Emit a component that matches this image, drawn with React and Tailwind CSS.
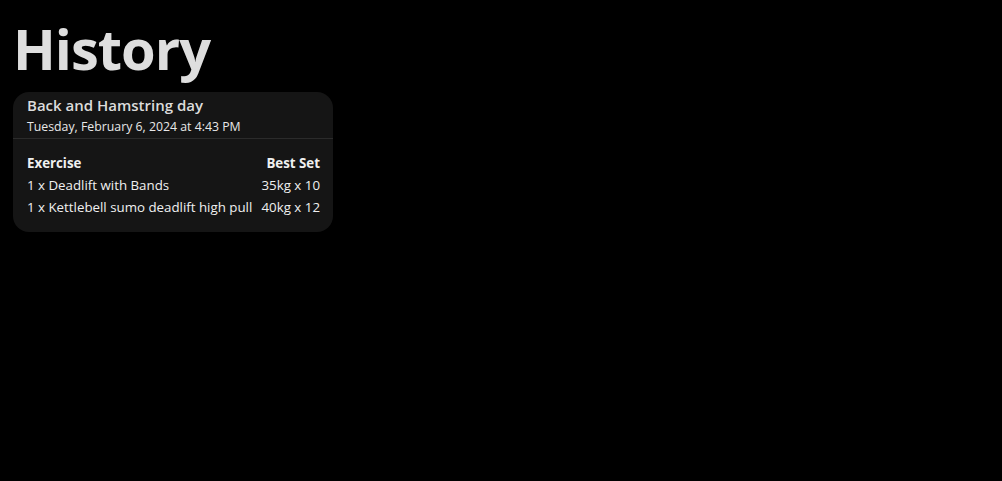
export default function App() {
  const rows = [
    { name: '1 x Deadlift with Bands', best: '35kg x 10' },
    { name: '1 x Kettlebell sumo deadlift high pull', best: '40kg x 12' },
  ]
  return (
    <div className="min-h-[481px] bg-black px-[13px] text-[#e5e5e5]" style={{ fontFamily: '"Open Sans", "Noto Sans", sans-serif' }}>
      <h1 className="text-[56px] font-bold leading-[72px] tracking-[-1px] text-[#dedede] pt-[12px]">History</h1>
      <div className="w-80 rounded-2xl bg-[#151515] mt-[8px] pb-[13px]">
        <div className="px-[14px] pt-[2px] border-b border-[#2b2b2b]">
          <p className="text-[15px] font-semibold leading-[22px] text-[#dcdcdc]">Back and Hamstring day</p>
          <p className="text-[12.3px] leading-[22px] text-[#e8e8e8]">Tuesday, February 6, 2024 at 4:43 PM</p>
        </div>
        <table className="mx-[14px] mt-[14px] w-[293px] text-[13.3px] text-[#f0f0f0]">
          <thead>
            <tr className="h-[22px]">
              <th className="text-left font-bold p-0">Exercise</th>
              <th className="text-right font-bold p-0">Best Set</th>
            </tr>
          </thead>
          <tbody>
            {rows.map(r => (
              <tr key={r.name} className="h-[22px]">
                <td className="p-0 whitespace-nowrap">{r.name}</td>
                <td className="p-0 text-right whitespace-nowrap">{r.best}</td>
              </tr>
            ))}
          </tbody>
        </table>
      </div>
    </div>
  )
}
